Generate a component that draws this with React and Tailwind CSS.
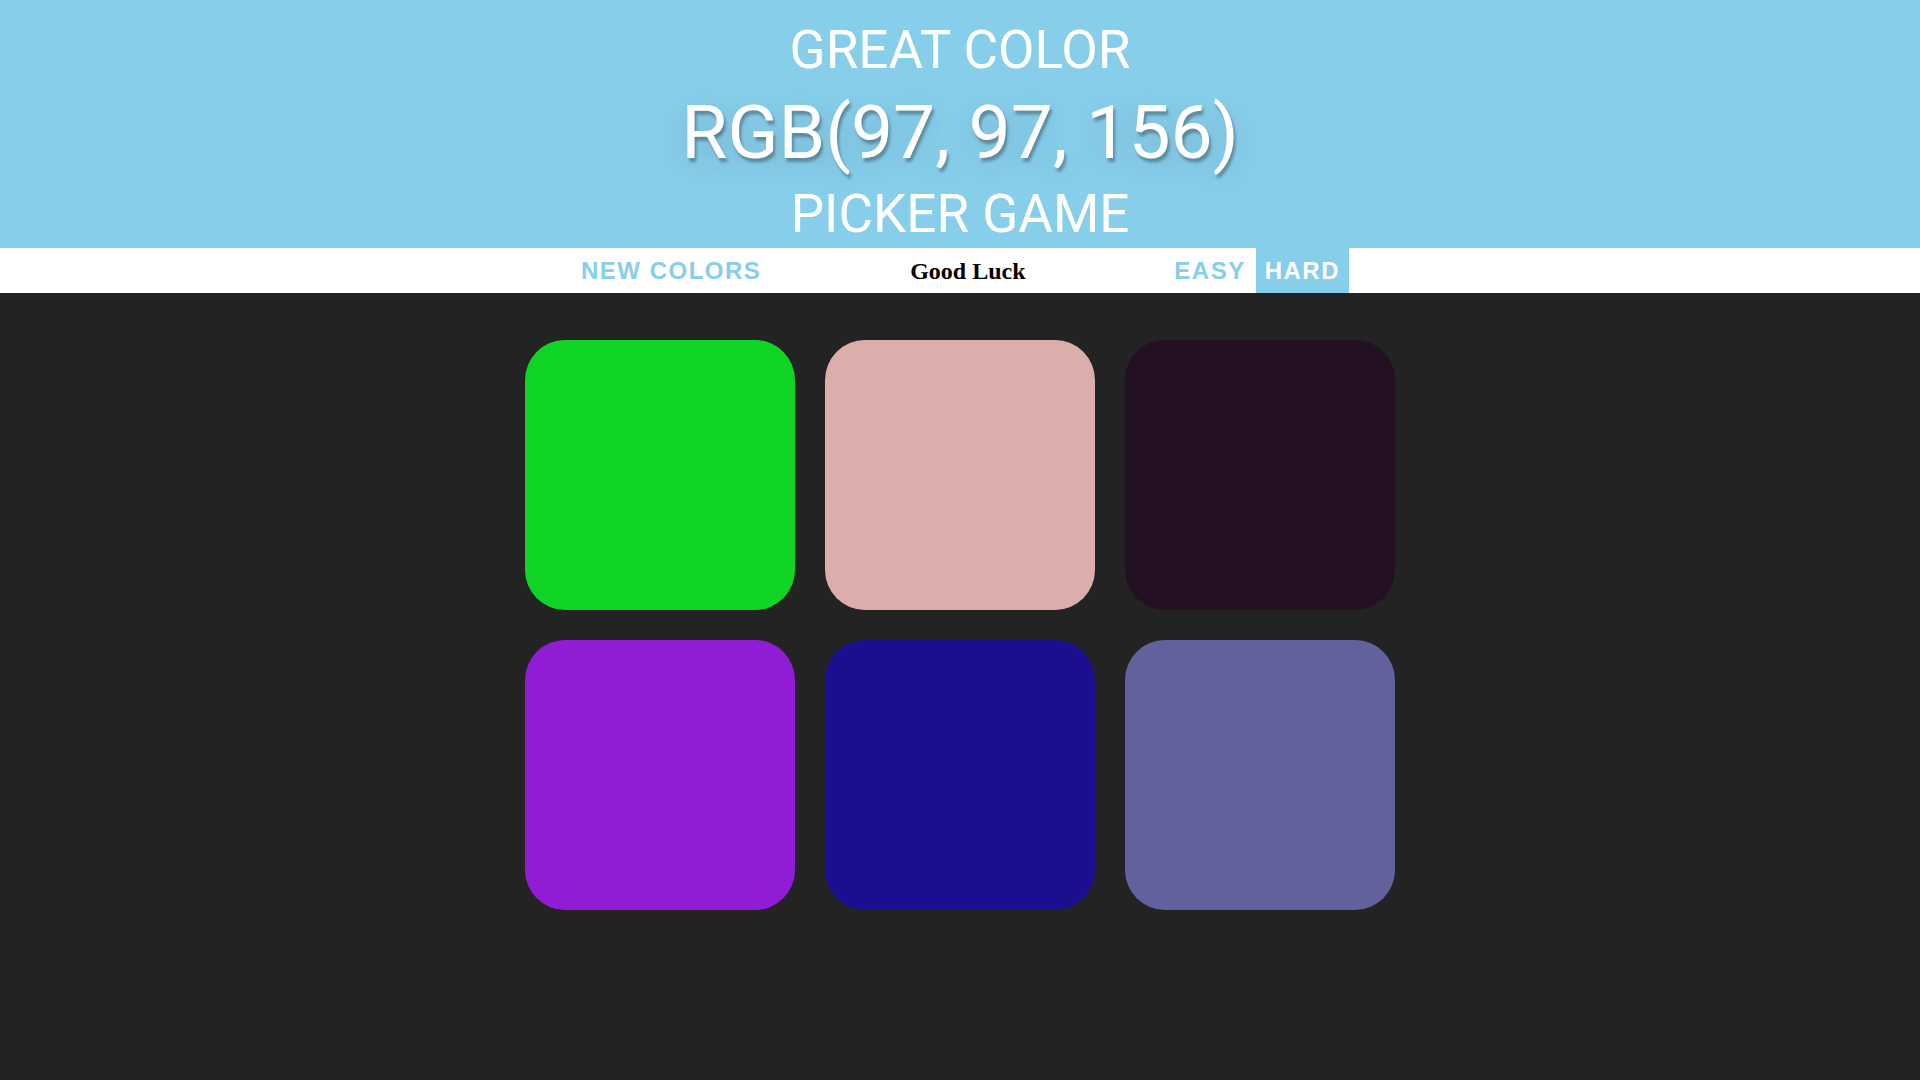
import React from "react";

const squares = ["#10d524", "#dbaeab", "#231022", "#911cd6", "#1c0f8f", "#61619c"];

const App = () => {
  const [mode, setMode] = React.useState("hard");

  return (
    <div className="min-h-screen bg-[#232323]">
      {/* Header */}
      <h1 className="bg-[#87ceeb] text-white text-center uppercase font-['Roboto',sans-serif] font-normal pt-[20px] pb-[5px]">
        <span className="block text-[53px] leading-[60px]">Great Color</span>
        <span className="block text-[75px] leading-[104.7px] [text-shadow:2px_4px_3px_rgba(0,0,0,0.3),0_8px_30px_rgba(0,0,0,0.15)]">
          RGB(97, 97, 156)
        </span>
        <span className="block text-[53px] leading-[58.3px]">Picker Game</span>
      </h1>

      {/* Stripe */}
      <div className="bg-white h-[45px] flex justify-center items-stretch">
        <button className="px-[10px] text-[24px] font-bold uppercase tracking-[1.5px] text-[#87ceeb] font-['Liberation_Sans',Arial,sans-serif]">
          New Colors
        </button>
        <span className="w-[393px] flex items-center justify-center text-[24px] font-bold text-black font-['Liberation_Serif','Times_New_Roman',serif]">
          Good Luck
        </span>
        <button
          onClick={() => setMode("easy")}
          className={`px-[10px] text-[24px] font-bold uppercase tracking-[1.5px] font-['Liberation_Sans',Arial,sans-serif] ${
            mode === "easy" ? "bg-[#87ceeb] text-white" : "text-[#87ceeb]"
          }`}
        >
          Easy
        </button>
        <button
          onClick={() => setMode("hard")}
          className={`px-[9px] text-[24px] font-bold uppercase tracking-[1.5px] font-['Liberation_Sans',Arial,sans-serif] ${
            mode === "hard" ? "bg-[#87ceeb] text-white" : "text-[#87ceeb]"
          }`}
        >
          Hard
        </button>
      </div>

      {/* Squares */}
      <div className="w-[900px] mx-auto pt-[32px] flex flex-wrap">
        {squares.map((c) => (
          <div key={c} className="w-[270px] h-[270px] m-[15px] rounded-[40px]" style={{ backgroundColor: c }} />
        ))}
      </div>
    </div>
  );
};

export default App;
